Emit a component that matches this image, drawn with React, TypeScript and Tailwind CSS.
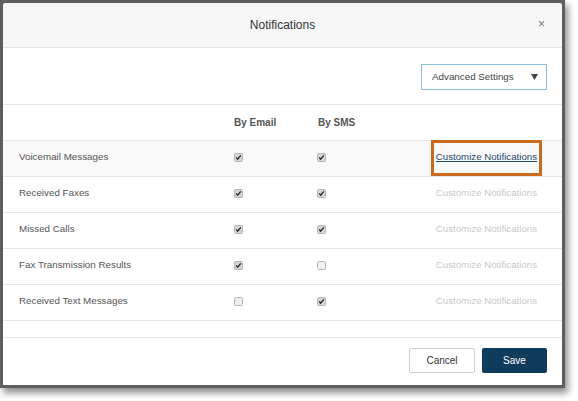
type Row = { name: string; email: boolean; sms: boolean; active?: boolean };

const rows: Row[] = [
  { name: "Voicemail Messages", email: true, sms: true, active: true },
  { name: "Received Faxes", email: true, sms: true },
  { name: "Missed Calls", email: true, sms: true },
  { name: "Fax Transmission Results", email: true, sms: false },
  { name: "Received Text Messages", email: false, sms: true },
];

function Check({ on }: { on: boolean }) {
  return (
    <svg width="9" height="9" viewBox="0 0 9 9" className="block">
      <rect x="0.5" y="0.5" width="8" height="8" rx="1" fill={on ? "#d6d6d6" : "#efefef"} stroke="#b5b5b5" />
      {on && <path d="M2.2 4.6 L3.7 6.2 L6.8 2.4" fill="none" stroke="#2b2b2b" strokeWidth="1.4" />}
    </svg>
  );
}

export default function App() {
  return (
    <div className="w-[578px] h-[401px] bg-white overflow-hidden font-['Liberation_Sans',Arial,sans-serif]">
      {/* overlay edge + drop shadow */}
      <div className="w-[565px] h-[388px] bg-[#5e5e5e] pl-[3px] pt-[3px] shadow-[3px_5px_7px_rgba(0,0,0,0.45)]">
        <div className="w-[559px] h-[382px] bg-white rounded-t-[3px] flex flex-col overflow-hidden">
          {/* Header */}
          <div className="h-[45px] shrink-0 bg-[#f7f7f7] border-b border-[#e3e3e3] flex items-center relative">
            <div className="flex-1 text-center text-[12px] text-[#333]">Notifications</div>
            <button className="absolute right-[17px] top-[15px] text-[12px] leading-none text-[#777]">×</button>
          </div>

          {/* Toolbar */}
          <div className="h-[57px] shrink-0 border-b border-[#e6e6e6] flex justify-end items-start pt-[16px] pr-[15px]">
            <div className="w-[126px] h-[26px] border border-[#8dbfe0] bg-white flex items-center justify-between pl-[10px] pr-[8px]">
              <span className="text-[9.8px] text-[#444]">Advanced Settings</span>
              <svg width="7" height="6" viewBox="0 0 7 6">
                <path d="M0 0 H7 L3.5 6 Z" fill="#444" />
              </svg>
            </div>
          </div>

          {/* Table header */}
          <div className="h-[36px] shrink-0 border-b border-[#e6e6e6] flex items-center pb-[1px]">
            <div className="w-[231px]" />
            <div className="w-[84px] text-[10px] font-bold text-[#555]">By Email</div>
            <div className="text-[10px] font-bold text-[#555]">By SMS</div>
          </div>

          {/* Rows */}
          {rows.map((r) => (
            <div
              key={r.name}
              className={
                "h-[36px] shrink-0 border-b border-[#e6e6e6] flex items-center " +
                (r.active ? "bg-[#f9f9f9]" : "bg-white")
              }
            >
              <div className="w-[231px] pl-[16px] pb-[3px] text-[9.8px] text-[#555]">{r.name}</div>
              <div className="w-[84px] pb-[3px]">
                <Check on={r.email} />
              </div>
              <div className="pb-[3px] -ml-[1px]">
                <Check on={r.sms} />
              </div>
              <div className="flex-1 self-stretch flex justify-end pr-[20px]">
                <span
                  className={
                    "-mt-[1px] h-[36px] flex items-center px-[2px] border-[3px] text-[9.7px] pb-[2px] " +
                    (r.active
                      ? "border-[#c96a1f] text-[#1e4a6b] underline"
                      : "border-transparent text-[#c9c9c9]")
                  }
                >
                  Customize Notifications
                </span>
              </div>
            </div>
          ))}

          <div className="flex-1" />

          {/* Footer */}
          <div className="h-[48px] shrink-0 border-t border-[#e6e6e6] flex justify-end items-start gap-[7px] pt-[10px] pr-[15px]">
            <button className="w-[66px] h-[25px] border border-[#cfcfcf] rounded-[2px] bg-white text-[10px] text-[#333]">
              Cancel
            </button>
            <button className="w-[65px] h-[25px] rounded-[2px] bg-[#0f3b5c] text-[10px] text-white">
              Save
            </button>
          </div>
        </div>
      </div>
    </div>
  );
}
